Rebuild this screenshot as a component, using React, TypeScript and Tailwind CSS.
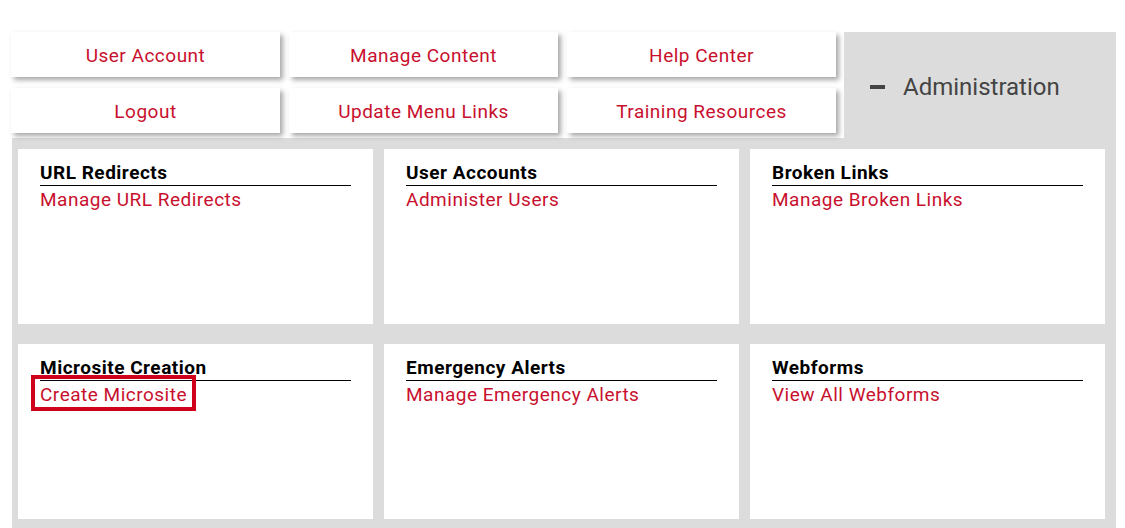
import React from "react";

const red = "text-[#c8102e]";

function NavButton({ label }: { label: string }) {
  return (
    <div className={`flex h-[45px] items-center justify-center bg-white pt-[4px] text-[19px] tracking-[0.5px] ${red} shadow-[3px_3px_5px_rgba(0,0,0,0.35)]`}>
      {label}
    </div>
  );
}

function Card({ title, link, highlight }: { title: string; link: string; highlight?: boolean }) {
  return (
    <div className="h-[175px] bg-white px-[22px] pt-[14px]">
      <div className="border-b border-black pb-[1px] text-[19px] font-bold leading-[1.1] tracking-[0.5px] text-black">{title}</div>
      <div className="mt-[3px]">
        <span className={`relative inline-block text-[19px] leading-[1.172] tracking-[0.5px] ${red}`}>
          {link}
          {highlight && (
            <span className="pointer-events-none absolute -left-[9px] -right-[9px] -top-[9px] -bottom-[5px] border-4 border-[#d0021b]" />
          )}
        </span>
      </div>
    </div>
  );
}

export default function App() {
  return (
    <div className="min-h-[528px] bg-white pl-[11px] pt-[32px]" style={{ fontFamily: "Roboto, 'Liberation Sans', sans-serif" }}>
      <div className="flex items-start">
        <div className="grid w-[825px] grid-cols-3 gap-x-[9px] gap-y-[11px]">
          <NavButton label="User Account" />
          <NavButton label="Manage Content" />
          <NavButton label="Help Center" />
          <NavButton label="Logout" />
          <NavButton label="Update Menu Links" />
          <NavButton label="Training Resources" />
        </div>
        <div className="ml-[8px] flex h-[106px] w-[272px] items-center bg-[#dcdcdc] pl-[26px] pt-[4px]">
          <span className="mr-[18px] inline-block h-[4px] w-[15px] bg-[#444444]" />
          <span className="text-[24px] text-[#444444]">Administration</span>
        </div>
      </div>
      <div className="ml-[1px] w-[1104px] bg-[#dcdcdc] pb-[9px] pl-[6px] pr-[11px] pt-[11px]">
        <div className="grid grid-cols-3 gap-x-[11px] gap-y-[20px]">
          <Card title="URL Redirects" link="Manage URL Redirects" />
          <Card title="User Accounts" link="Administer Users" />
          <Card title="Broken Links" link="Manage Broken Links" />
          <Card title="Microsite Creation" link="Create Microsite" highlight />
          <Card title="Emergency Alerts" link="Manage Emergency Alerts" />
          <Card title="Webforms" link="View All Webforms" />
        </div>
      </div>
    </div>
  );
}
